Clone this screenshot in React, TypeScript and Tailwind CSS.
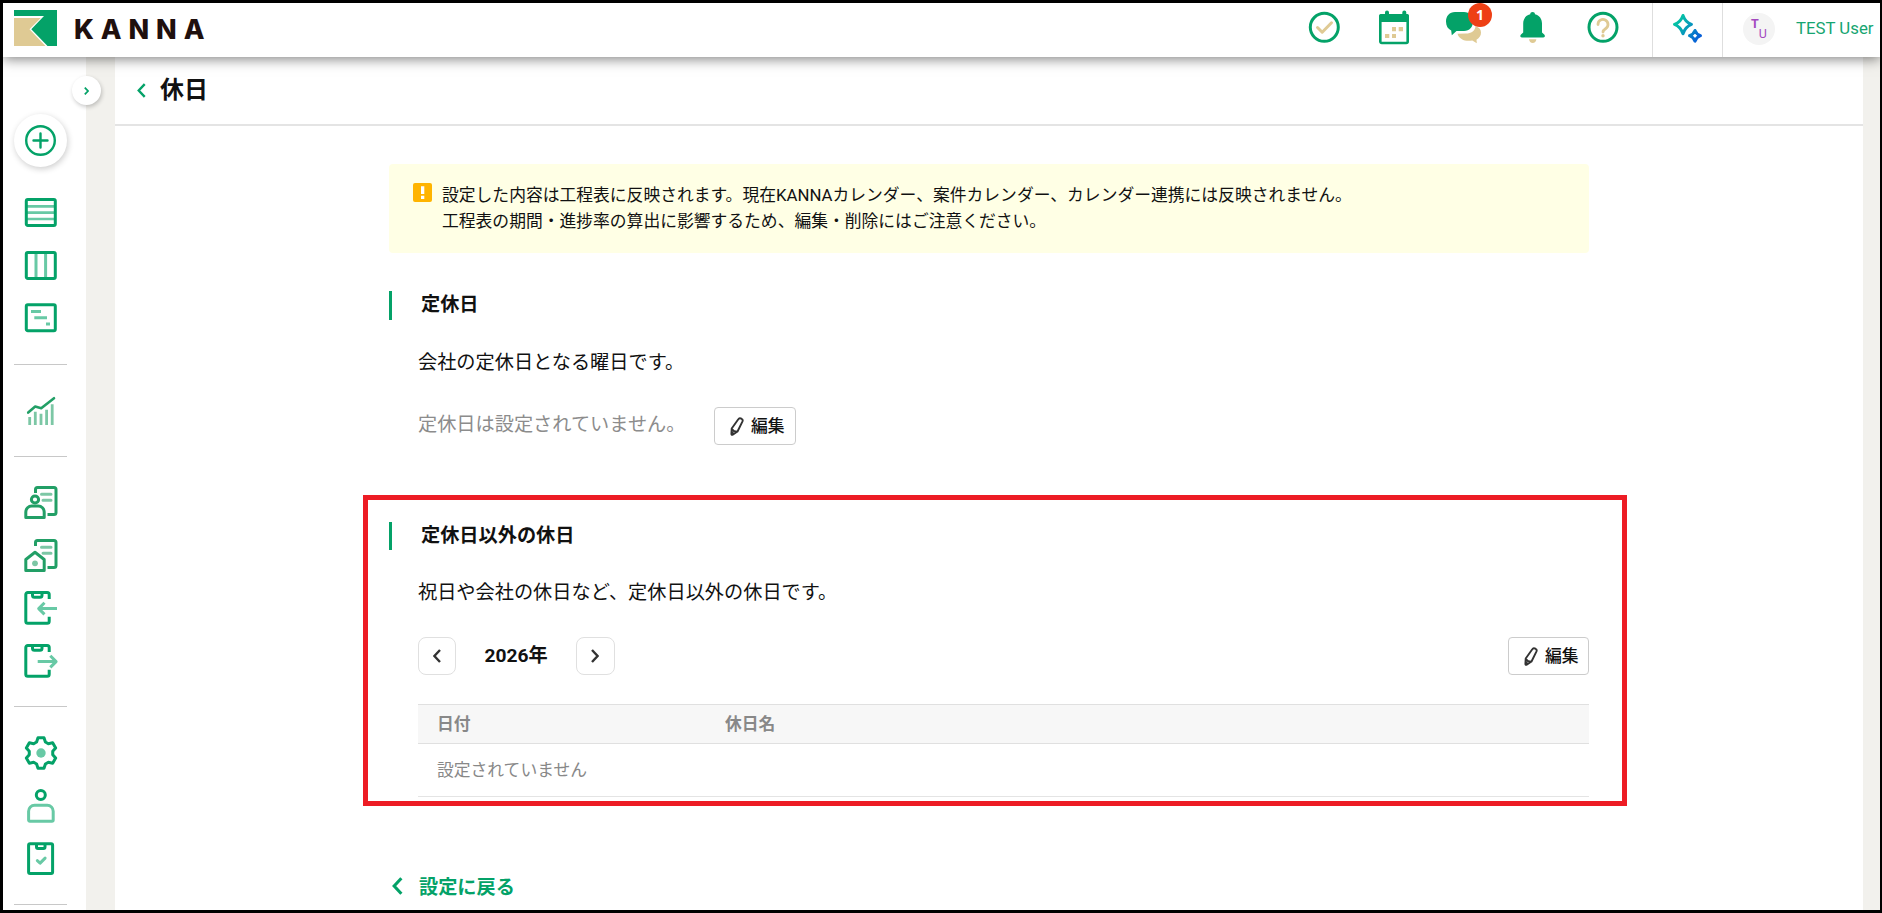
import type { ReactNode } from 'react';

const GREEN = '#04a268';
const LIGHT = '#68c9a5';
const BEIGE = '#dfca94';

type IconProps = { children: ReactNode; className?: string };

function SideIcon({ children, className = '' }: IconProps) {
	return (
		<svg
			viewBox="0 0 34 34"
			fill="none"
			stroke={GREEN}
			strokeWidth={3}
			strokeLinejoin="round"
			className={`ml-[10px] block h-[34px] w-[34px] shrink-0 overflow-visible ${className}`}
		>
			{children}
		</svg>
	);
}

function HeaderIcon({ children }: IconProps) {
	return (
		<svg viewBox="0 0 34 36" fill="none" className="block h-[36px] w-[34px] shrink-0 overflow-visible">
			{children}
		</svg>
	);
}

function Chevron({ dir, className, width = 2 }: { dir: 'left' | 'right'; className: string; width?: number }) {
	return (
		<svg viewBox="0 0 8 14" fill="none" stroke="currentColor" strokeWidth={width} className={className}>
			<path d={dir === 'left' ? 'M7 1 1.4 7 7 13' : 'M1 1l5.6 6L1 13'} />
		</svg>
	);
}

function Clipboard() {
	return (
		<>
			<path d="M25.2 8V3.5a2 2 0 0 0-2-2H3.8a2 2 0 0 0-2 2v26.7a2 2 0 0 0 2 2h19.400a2 2 0 0 0 2-2V25.7" />
			<path d="M8.5 1.5v2.700a2 2 0 0 0 2 2h5.500a2 2 0 0 0 2-2V1.500" />
		</>
	);
}

function DocSheet() {
	return (
		<>
			<path d="M11.5 7V3.500a2 2 0 0 1 2-2h16.500a2 2 0 0 1 2 2V26.500a2 2 0 0 1-2 2h-6.500" stroke="#229f66" />
			<path d="M17.5 8.300h9.500M19 14.300h8" stroke="#7cc7a5" strokeLinecap="round" />
		</>
	);
}

// six teeth, one every 60 degrees
const gearPoints = [0, 60, 120, 180, 240, 300]
	.flatMap((deg) => {
		const a = (deg * Math.PI) / 180;
		return [[-4.4, -11], [-3, -15.2], [3, -15.2], [4.4, -11]].map(([x, y]) => {
			const px = 17 + x * Math.cos(a) - y * Math.sin(a);
			const py = 17 + x * Math.sin(a) + y * Math.cos(a);
			return `${px.toFixed(2)},${py.toFixed(2)}`;
		});
	})
	.join(' ');

function Divider({ className }: { className: string }) {
	return <div className={`h-px w-[53px] shrink-0 bg-[#c8c8c8] ${className}`} />;
}

function Header() {
	return (
		<header className="relative z-10 flex h-[54px] shrink-0 bg-white shadow-[0_2px_12px_rgba(0,0,0,0.5)]">
			<div className="flex items-start pl-[11px] pt-[7px]">
				<svg viewBox="0 0 43 36" className="h-[36px] w-[43px]">
					<path d="M0 0h43v36h-9.500L17.300 19.300 30 6H0z" fill={GREEN} />
					<path d="M0 8h26.800L15.500 19.300 31.500 36H0z" fill={BEIGE} />
				</svg>
				<span className="ml-[17px] font-['Inter'] text-[27px] font-extrabold leading-[40px] tracking-[6.9px] text-[#1f100e]">
					KANNA
				</span>
			</div>
			<div className="ml-auto flex">
				<div className="flex gap-[36px] pr-[31px] pt-[7px]">
					<HeaderIcon>
						<circle cx="17.3" cy="17.3" r="14" stroke={GREEN} strokeWidth="3" />
						<path d="m10.500 17.500 4.700 4.700 9.300-9.400" stroke={BEIGE} strokeWidth="3" strokeLinecap="round" strokeLinejoin="round" />
					</HeaderIcon>
					<HeaderIcon>
						<rect x="3.3" y="5.3" width="27.4" height="27.7" rx="1.5" stroke={GREEN} strokeWidth="2.6" />
						<path d="M2 12V6a2 2 0 0 1 2-2h4V2.500a2 2 0 0 1 4 0V4h13.300V2.500a2 2 0 0 1 4 0V4H30a2 2 0 0 1 2 2v6z" fill={GREEN} />
						<path d="M8 24h4.300v4H8zM15 24h4v4h-4zM15 17h4v4.300h-4zM21.700 17H26v4.300h-4.300z" fill={BEIGE} />
					</HeaderIcon>
					<div className="relative">
						<HeaderIcon>
							<path
								d="M28.500 16.500c3.500.5 5.500 2.500 5.500 6 0 3-1.500 5.500-4.500 7.200l.3 3.500-4.500-2.700c-7 1.200-13-1-14.800-6.800L19 23.500c5 0 9-2.500 9.500-7z"
								fill={BEIGE}
							/>
							<path
								d="M8 2h9c5.500 0 9 4 9 9.500S22.500 21 17 21H9.500L4.800 25.200 4.200 20.500C1 19 -1 16 -1 11.500-1 6 2.500 2 8 2z"
								fill={GREEN}
							/>
						</HeaderIcon>
						<span className="absolute -top-[7px] left-[21px] flex h-[24px] w-[24px] items-center justify-center rounded-full bg-[#ee4015] font-['Open_Sans'] text-[14px] font-bold leading-none text-white">
							1
						</span>
					</div>
					<HeaderIcon>
						<path
							d="M15.600 2c1.400 0 2.300.9 2.400 2.200 4.500 1 7 4.800 7 9.300v9l2.200 2c1.200 1.200.8 3-.9 3H4.900c-1.700 0-2.100-1.800-.9-3l2.200-2v-9c0-4.500 2.500-8.300 7-9.300.1-1.300 1-2.200 2.400-2.200z"
							fill={GREEN}
						/>
						<path d="M12 29.300h7.400c-.3 2.200-1.700 3.700-3.700 3.700s-3.400-1.500-3.700-3.700z" fill={BEIGE} />
					</HeaderIcon>
					<HeaderIcon>
						<circle cx="16" cy="17.3" r="14" stroke={GREEN} strokeWidth="3" />
						<path d="M11 14.500a5 5 0 1 1 7.800 4c-1.900 1.300-2.800 2-2.800 3.500" stroke={BEIGE} strokeWidth="2.8" strokeLinecap="round" />
						<circle cx="16" cy="25.7" r="1.7" fill={BEIGE} />
					</HeaderIcon>
				</div>
				<div className="flex w-[71px] justify-center border-x border-[#dedede] pt-[10px]">
					<svg viewBox="0 0 31 32" fill="none" strokeWidth="3" strokeLinejoin="round" className="h-[32px] w-[31px]">
						<defs>
							<linearGradient id="spark" x1="0" y1="6" x2="30" y2="28" gradientUnits="userSpaceOnUse">
								<stop offset="0" stopColor="#04d49b" />
								<stop offset="0.5" stopColor="#0796bd" />
								<stop offset="1" stopColor="#0750e0" />
							</linearGradient>
						</defs>
						<path d="M11 2.500c1.500 4.500 4 7.300 8.500 8.800C15 13 12.500 16 11 20.800 9.500 16 7 13 2.500 11.300 7 9.800 9.500 7 11 2.500z" stroke="url(#spark)" />
						<path d="M23 17.500c1 2.700 2.500 4.200 5.500 5.200-3 1-4.500 2.500-5.500 5.500-1-3-2.500-4.500-5.500-5.500 3-1 4.500-2.500 5.500-5.200z" stroke="url(#spark)" />
					</svg>
				</div>
				<div className="flex w-[157px] items-start pl-[20px]">
					<div className="mt-[10px] flex h-[32px] w-[32px] justify-center rounded-full bg-[#f4f4f4] font-['Roboto'] text-[12.5px] leading-none text-[#a349bf]">
						<span className="mt-[5px] font-bold">T</span>
						<span className="mt-[15px]">U</span>
					</div>
					<span className="ml-[21px] mt-[13px] whitespace-nowrap text-[16.8px] leading-[24px] text-[#16a571]">TEST User</span>
				</div>
			</div>
		</header>
	);
}

function Sidebar() {
	return (
		<nav className="relative flex w-[83px] shrink-0 flex-col bg-white pl-[11px] pt-[57px]">
			<button className="absolute left-[69px] top-[19px] z-10 flex h-[29px] w-[29px] items-center justify-center rounded-full bg-white text-[#04a268] shadow-[1px_2px_4px_rgba(0,0,0,0.22)]">
				<Chevron dir="right" className="h-[8px] w-[5px]" width={3} />
			</button>
			<button className="flex h-[53px] w-[53px] shrink-0 items-center justify-center rounded-full bg-white shadow-[1px_2px_6px_rgba(0,0,0,0.2)]">
				<svg viewBox="0 0 31 31" fill="none" stroke={GREEN} strokeWidth="2.4" className="h-[31px] w-[31px]">
					<circle cx="15.5" cy="15.5" r="14.300" />
					<path d="M15.500 8.500v14M8.500 15.500h14" strokeLinecap="round" />
				</svg>
			</button>

			<SideIcon className="mt-[29px]">
				<path d="M3 10.300h27M3 16.700h27M3 23h27" stroke={LIGHT} strokeWidth={2.7} />
				<rect x="2.3" y="3.5" width="29" height="26" rx="1.5" />
			</SideIcon>
			<SideIcon className="mt-[19px]">
				<path d="M12 4v25M21.600 4v25" stroke={LIGHT} />
				<rect x="2.3" y="3.5" width="29" height="26" rx="1.5" />
			</SideIcon>
			<SideIcon className="mt-[18px]">
				<path d="M7 10.400h10M10.300 16.700H23M22 23h4" stroke={LIGHT} />
				<rect x="2.3" y="3.7" width="29" height="26" rx="1.5" />
			</SideIcon>

			<Divider className="mt-[29px]" />

			<SideIcon className="mt-[29px]">
				<path d="M5.700 31v-8M11.300 31V17.700M17 31V19.700M22.600 31V15.700M28.200 31V10.300" stroke="#7cc7a5" strokeWidth={2.8} />
				<path d="m4.200 18.600 7-6 6 1.600L30 4.200" stroke="#229f66" strokeWidth={2.6} strokeLinecap="round" />
			</SideIcon>

			<Divider className="mt-[28px]" />

			<SideIcon className="mt-[29px]">
				<DocSheet />
				<circle cx="11" cy="13.5" r="5.5" stroke="none" fill="#fff" />
				<circle cx="11" cy="13.5" r="3.6" stroke="#229f66" />
				<path d="M1.800 31.500V26a6 6 0 0 1 6-6h6.400a6 6 0 0 1 6 6v5.500z" stroke="#229f66" />
			</SideIcon>
			<SideIcon className="mt-[19px]">
				<DocSheet />
				<path d="M1.800 31.500V20.500L11 13.300l9.200 7.200v11z" stroke="#fff" strokeWidth={5} />
				<path d="M1.800 31.500V20.500L11 13.300l9.200 7.200v11z" stroke="#229f66" fill="#fff" />
				<circle cx="11" cy="24.3" r="2.9" fill="#7cc7a5" stroke="none" />
			</SideIcon>
			<SideIcon className="mt-[18px]">
				<Clipboard />
				<path d="M33 17.600H15M20.500 11.800l-5.800 5.800 5.800 5.800" stroke={LIGHT} />
			</SideIcon>
			<SideIcon className="mt-[19px]">
				<Clipboard />
				<path d="M13.700 17.600H32M26.300 11.800l5.800 5.800-5.800 5.800" stroke={LIGHT} />
			</SideIcon>

			<Divider className="mt-[28px]" />

			<SideIcon className="mt-[29px]">
				<polygon points={gearPoints} />
				<circle cx="17" cy="17" r="4.7" fill={LIGHT} stroke="none" />
			</SideIcon>
			<SideIcon className="mt-[19px]">
				<circle cx="16.8" cy="6" r="4.5" />
				<path d="M4.600 31V22.200a6 6 0 0 1 6-6h12.600a6 6 0 0 1 6 6V31a1.300 1.300 0 0 1-1.300 1.300h-22A1.300 1.300 0 0 1 4.600 31z" stroke={LIGHT} />
			</SideIcon>
			<SideIcon className="mt-[19px]">
				<rect x="4.6" y="1.8" width="24" height="29.8" rx="1.5" />
				<path d="M12.500 2v3a1.500 1.500 0 0 0 1.500 1.500h5.500A1.500 1.500 0 0 0 21 5V2" />
				<path d="m13.300 18.700 2.800 2.400 5-5" stroke={LIGHT} strokeLinecap="round" />
			</SideIcon>

			<Divider className="mt-[28px]" />
		</nav>
	);
}

function EditButton({ className = 'w-[82px]' }: { className?: string }) {
	return (
		<button className={`flex h-[38px] shrink-0 items-center rounded-[4px] border border-[#ccc] bg-white pl-[15px] text-[16.8px] font-medium leading-none text-[#111] ${className}`}>
			<svg viewBox="0 0 14 19" fill="none" stroke="#333" strokeWidth="1.9" strokeLinejoin="round" className="mt-px h-[19px] w-[14px]">
				<path d="M8.300 2.300c.5-.9 1.500-1.300 2.400-.9l.9.500c1 .5 1.300 1.500.9 2.500L7.500 14.500 2.700 17.700c-.7.400-1.300.1-1.300-.7l.3-5.500z" />
				<path d="M1.900 12c1 1.700 2.700 2.700 5.200 2.700M1.600 15l2.200 2" />
			</svg>
			<span className="ml-[7px] whitespace-nowrap">編集</span>
		</button>
	);
}

function SectionTitle({ children, className }: { children: ReactNode; className: string }) {
	return (
		<h2 className={`flex border-l-[3px] border-[#04a268] pl-[29px] text-[19.2px] font-bold leading-[28px] ${className}`}>
			{children}
		</h2>
	);
}

export default function App() {
	return (
		<div className="flex h-[913px] w-[1882px] flex-col overflow-hidden border-[3px] border-r-2 border-black bg-[#f2f1ed] font-['Roboto','Noto_Sans_CJK_JP',sans-serif] text-[#111]">
			<Header />
			<div className="flex min-h-0 flex-1">
				<Sidebar />
				<main className="ml-[29px] mr-[17px] flex-1 overflow-hidden bg-white">
					<div className="flex h-[69px] items-center border-b-2 border-[#e4e4e4]">
						<Chevron dir="left" className="ml-[22px] h-[15px] w-[9px] text-[#04a268]" width={2.2} />
						<h1 className="-mt-[2px] ml-[14px] text-[24px] font-bold leading-[34px]">休日</h1>
					</div>

					<div className="ml-[274px] w-[1200px]">
						<div className="mt-[38px] flex h-[89px] rounded-[4px] bg-[#ffffe5] pl-[24px] pt-[18px]">
							<svg viewBox="0 0 19 19" className="mt-px h-[19px] w-[19px]">
								<rect width="19" height="19" rx="2" fill="#ffb400" />
								<path d="M8 3.300h3.300v7.700H8zM8 12.700h3.300v3.300H8z" fill="#fff" />
							</svg>
							<p className="ml-[10px] text-[16.8px] leading-[26px]">
								設定した内容は工程表に反映されます。現在KANNAカレンダー、案件カレンダー、カレンダー連携には反映されません。
								<br />
								工程表の期間・進捗率の算出に影響するため、編集・削除にはご注意ください。
							</p>
						</div>

						<section className="mt-[38px]">
							<SectionTitle className="h-[29px]">定休日</SectionTitle>
							<p className="ml-[29px] mt-[28px] text-[19.2px] leading-[30px]">会社の定休日となる曜日です。</p>
							<div className="ml-[29px] mt-[29px] flex h-[38px]">
								<p className="w-[296px] text-[19.2px] leading-[36px] text-[#8c8c8c]">定休日は設定されていません。</p>
								<EditButton />
							</div>
						</section>

						<section className="-ml-[26px] -mr-[38px] mt-[50px] border-[5px] border-[#ed1c24] pb-[4px] pl-[21px] pr-[33px] pt-[22px]">
							<SectionTitle className="h-[28px]">定休日以外の休日</SectionTitle>
							<p className="ml-[29px] mt-[28px] text-[19.2px] leading-[30px]">祝日や会社の休日など、定休日以外の休日です。</p>
							<div className="ml-[29px] mt-[29px] flex h-[38px] items-center">
								<button className="flex h-[38px] w-[38px] items-center justify-center rounded-[8px] border border-[#e0e0e0] text-[#333]">
									<Chevron dir="left" className="h-[14px] w-[8px]" width={2.4} />
								</button>
								<span className="w-[120px] text-center text-[19.2px] font-bold leading-[38px]">2026年</span>
								<button className="flex h-[38px] w-[39px] items-center justify-center rounded-[8px] border border-[#e0e0e0] pr-px text-[#333]">
									<Chevron dir="right" className="h-[14px] w-[8px]" width={2.4} />
								</button>
								<EditButton className="ml-auto w-[81px]" />
							</div>
							<div className="ml-[29px] mt-[29px]">
								<div className="flex h-[40px] border-y border-[#e0e0e0] bg-[#f7f7f7] pl-[19px] text-[16.8px] font-bold leading-[38px] text-[#888]">
									<span className="w-[288px]">日付</span>
									<span>休日名</span>
								</div>
								<div className="h-[53px] border-b border-[#e4e4e4] pl-[19px] text-[16.8px] leading-[52px] text-[#888]">
									設定されていません
								</div>
							</div>
						</section>

						<a href="#settings" className="mt-[65px] flex h-[30px] items-center text-[19.2px] font-bold leading-[30px] text-[#04a268]">
							<Chevron dir="left" className="ml-[3px] h-[18px] w-[11px]" width={2.4} />
							<span className="ml-[16px] mt-[4px]">設定に戻る</span>
						</a>
					</div>
				</main>
			</div>
		</div>
	);
}
